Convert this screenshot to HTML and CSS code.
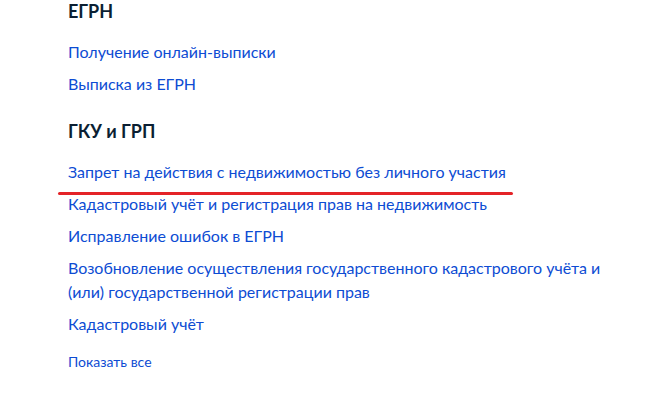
FILE: index.html
```html
<!DOCTYPE html>
<html lang="ru">
<head>
<meta charset="utf-8">
<link rel="stylesheet" href="styles.css">
</head>
<body>
<main class="page">
  <section class="group">
    <h2 class="group-title">ЕГРН</h2>
    <ul class="links">
      <li><a href="#">Получение онлайн-выписки</a></li>
      <li><a href="#">Выписка из ЕГРН</a></li>
    </ul>
  </section>
  <section class="group">
    <h2 class="group-title">ГКУ и ГРП</h2>
    <ul class="links">
      <li class="marked"><a href="#">Запрет на действия с недвижимостью без личного участия</a><span class="mark"></span></li>
      <li><a href="#">Кадастровый учёт и регистрация прав на недвижимость</a></li>
      <li><a href="#">Исправление ошибок в ЕГРН</a></li>
      <li><a href="#">Возобновление осуществления государственного кадастрового учёта и (или) государственной регистрации прав</a></li>
      <li><a href="#">Кадастровый учёт</a></li>
    </ul>
    <a class="show-all" href="#">Показать все</a>
  </section>
</main>
</body>
</html>
```
FILE: styles.css
```css
html, body {
  margin: 0;
  padding: 0;
  background: #ffffff;
}
body {
  font-family: Lato, "Noto Sans", "Liberation Sans", sans-serif;
  color: #0b1f33;
}
.page {
  padding: 0 20px 0 68px;
}
.group {
  display: flex;
  flex-direction: column;
  align-items: flex-start;
}
.group + .group {
  margin-top: 24px;
}
.group-title {
  margin: 0;
  font-size: 18px;
  line-height: 22px;
  font-weight: 700;
  color: #0b1f33;
}
.links {
  list-style: none;
  margin: 18px 0 0;
  padding: 0;
  display: flex;
  flex-direction: column;
  gap: 8px;
}
.links li {
  font-size: 16px;
  line-height: 24px;
}
.links a, .show-all {
  color: #0d4cd3;
  text-decoration: none;
}
.marked {
  position: relative;
}
.mark {
  position: absolute;
  left: -10px;
  top: 32px;
  width: 455px;
  height: 3px;
  border-radius: 2px;
  background: #e42328;
}
.show-all {
  margin-top: 16px;
  font-size: 14px;
  line-height: 20px;
}
```
